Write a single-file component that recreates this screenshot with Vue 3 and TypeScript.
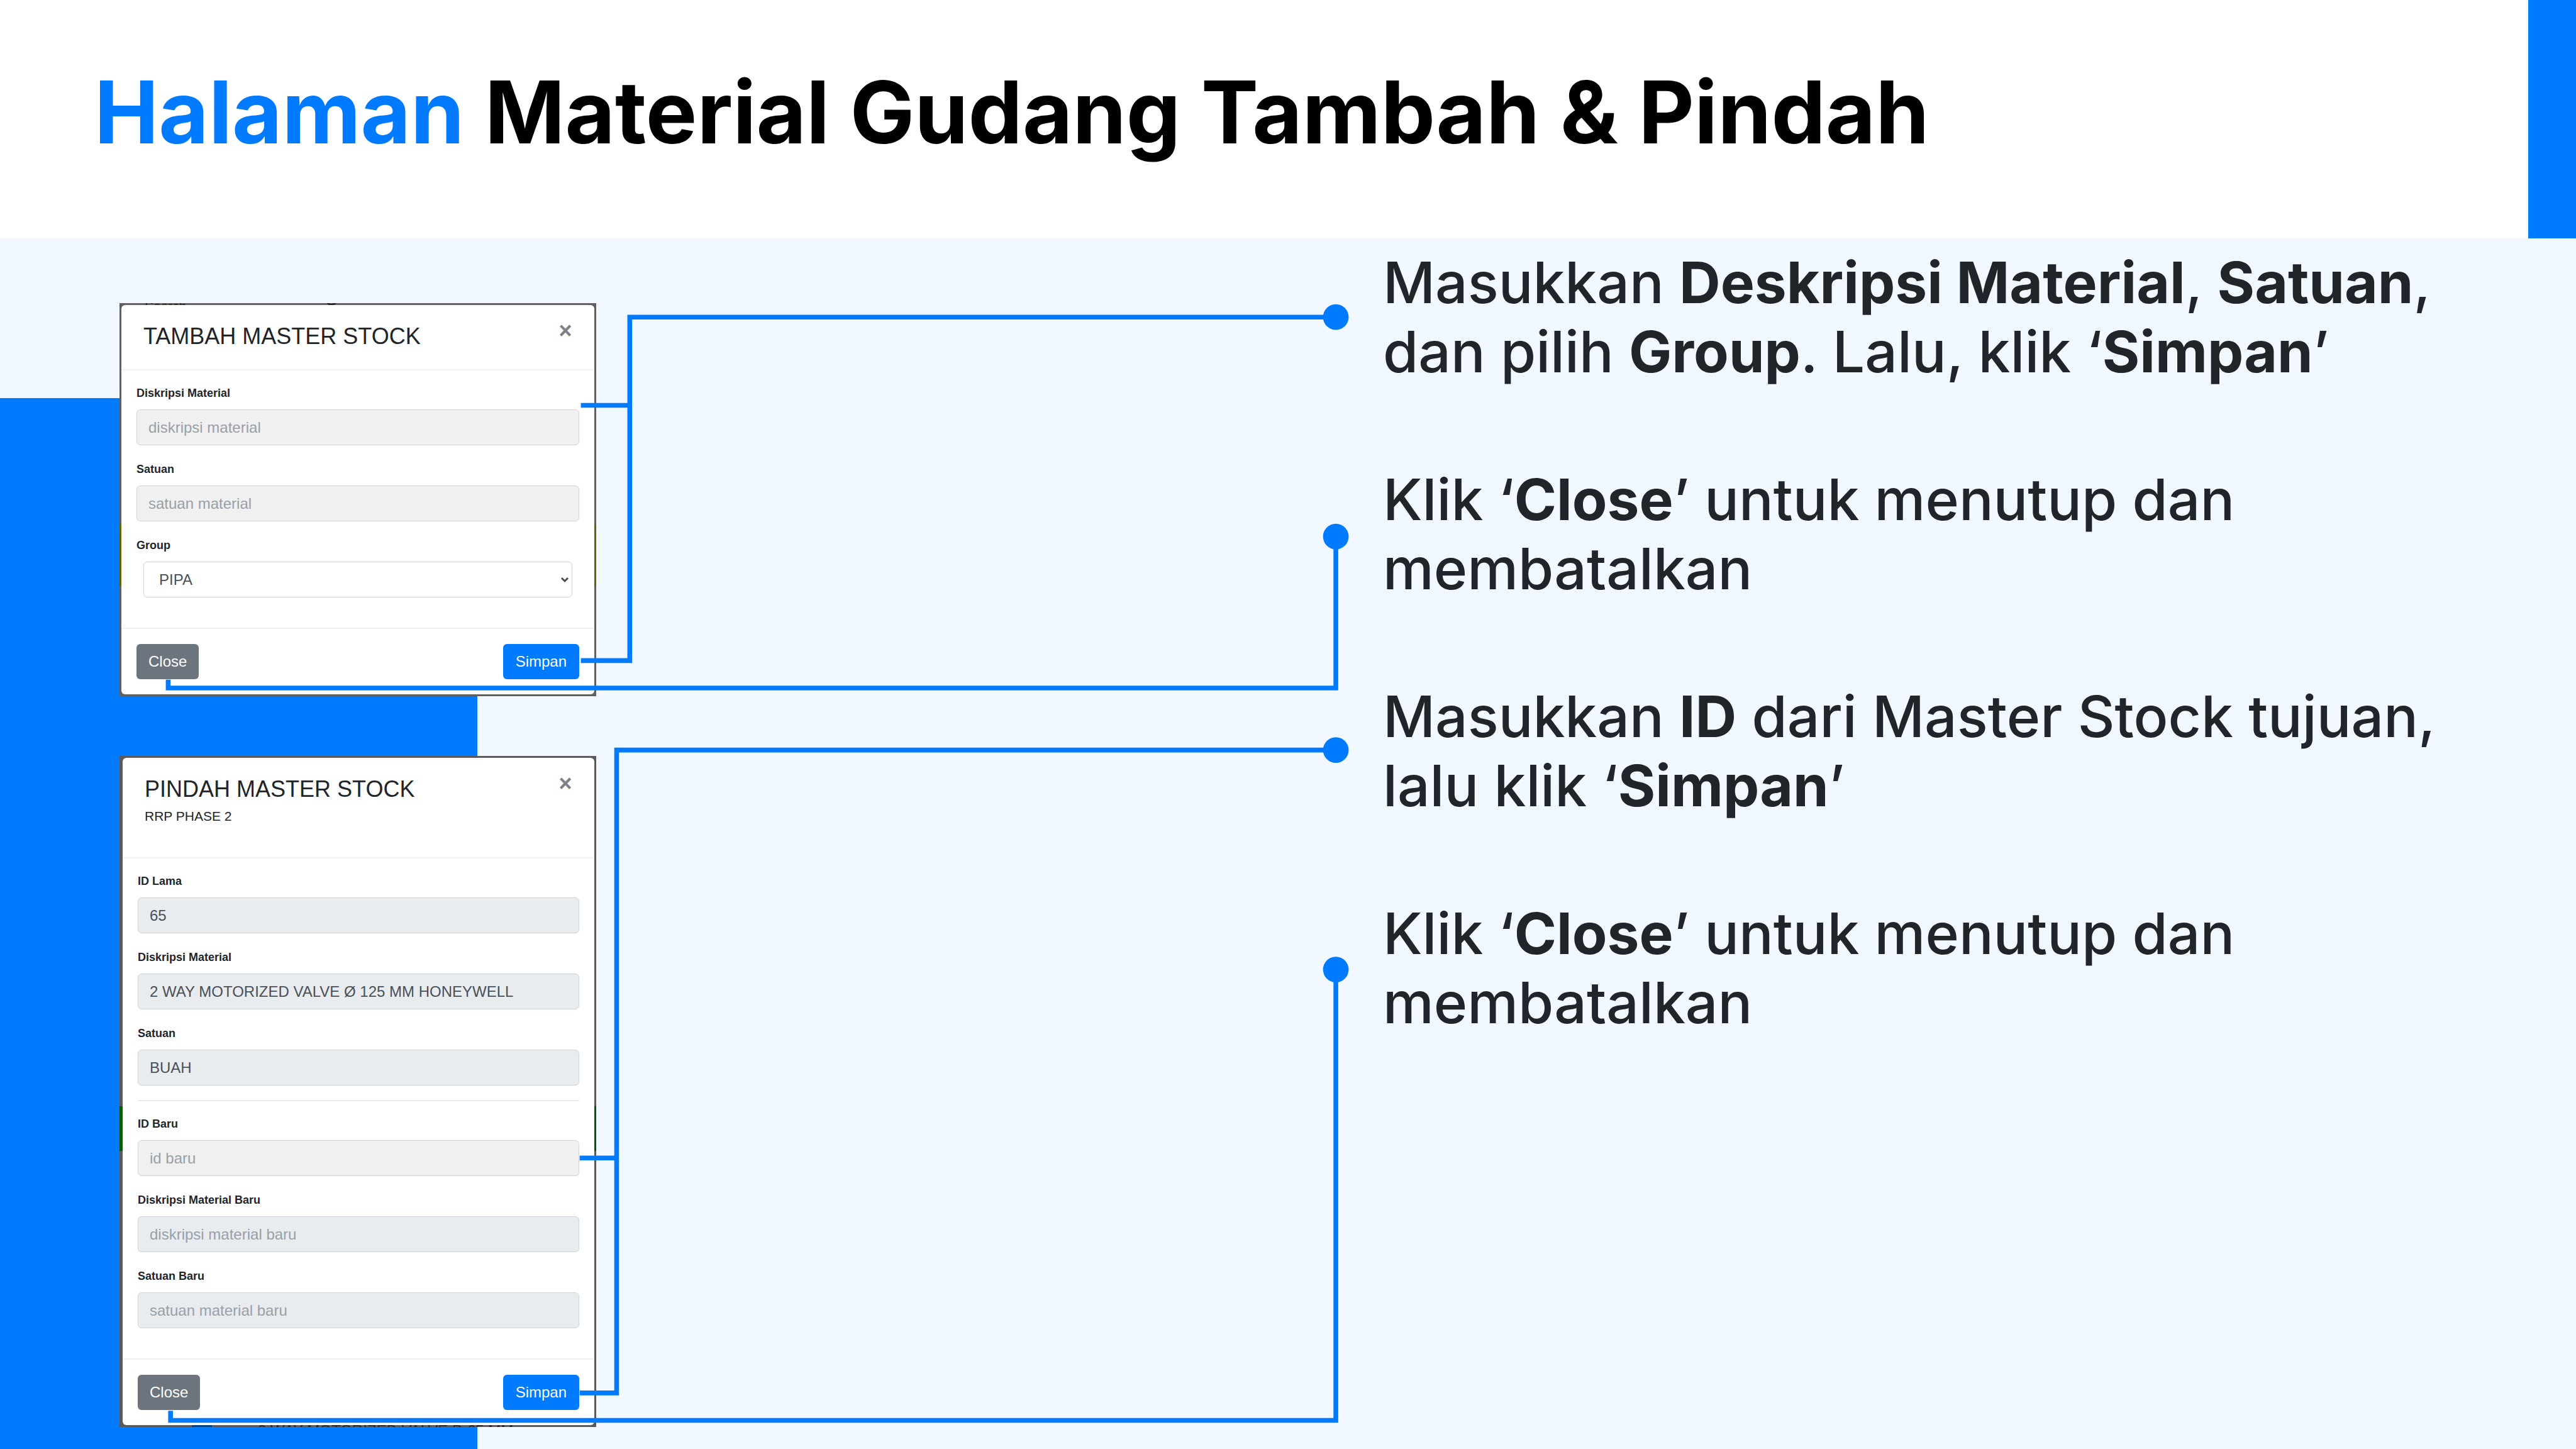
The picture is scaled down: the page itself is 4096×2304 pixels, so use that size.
<script setup lang="ts">
import { ref } from 'vue'

interface Field {
  id: string
  label: string
  placeholder?: string
  value?: string
  locked?: boolean
}

interface Part {
  text: string
  strong?: boolean
}

const addFields: Field[] = [
  { id: 'add-desc', label: 'Diskripsi Material', placeholder: 'diskripsi material' },
  { id: 'add-unit', label: 'Satuan', placeholder: 'satuan material' },
]

const oldFields: Field[] = [
  { id: 'old-id', label: 'ID Lama', value: '65', locked: true },
  { id: 'old-desc', label: 'Diskripsi Material', value: '2 WAY MOTORIZED VALVE Ø 125 MM HONEYWELL', locked: true },
  { id: 'old-unit', label: 'Satuan', value: 'BUAH', locked: true },
]

const newFields: Field[] = [
  { id: 'new-id', label: 'ID Baru', placeholder: 'id baru' },
  { id: 'new-desc', label: 'Diskripsi Material Baru', placeholder: 'diskripsi material baru', locked: true },
  { id: 'new-unit', label: 'Satuan Baru', placeholder: 'satuan material baru', locked: true },
]

const group = ref('PIPA')

const notes: Part[][] = [
  [
    { text: 'Masukkan ' },
    { text: 'Deskripsi Material', strong: true },
    { text: ', ' },
    { text: 'Satuan', strong: true },
    { text: ', dan pilih ' },
    { text: 'Group', strong: true },
    { text: '. Lalu, klik ‘' },
    { text: 'Simpan', strong: true },
    { text: '’' },
  ],
  [{ text: 'Klik ‘' }, { text: 'Close', strong: true }, { text: '’ untuk menutup dan membatalkan' }],
  [
    { text: 'Masukkan ' },
    { text: 'ID', strong: true },
    { text: ' dari Master Stock tujuan, lalu klik ‘' },
    { text: 'Simpan', strong: true },
    { text: '’' },
  ],
  [{ text: 'Klik ‘' }, { text: 'Close', strong: true }, { text: '’ untuk menutup dan membatalkan' }],
]

const connectors = [
  'M974 680H1056M974 1108H1056V532H2240',
  'M282 1140V1154H2240V900',
  'M972 1942H1034M972 2336H1034V1258H2240',
  'M286 2366V2382H2240V1626',
]
const dots = [532, 900, 1258, 1626]
</script>

<template>
  <main class="slide">
    <header class="head">
      <h1><span>Halaman</span> Material Gudang Tambah &amp; Pindah</h1>
    </header>

    <section class="stage">
      <div class="forms">
        <div class="frame frame-add">
          <span class="behind behind-search">Search</span>
          <span class="behind behind-lens"></span>
          <form class="modal" @submit.prevent>
            <div class="modal-head">
              <h2>TAMBAH MASTER STOCK</h2>
              <button type="button" class="dismiss" aria-label="Tutup">×</button>
            </div>
            <div class="modal-body">
              <div v-for="f in addFields" :key="f.id" class="field">
                <label :for="f.id">{{ f.label }}</label>
                <input :id="f.id" type="text" :placeholder="f.placeholder" />
              </div>
              <div class="field">
                <label for="add-group">Group</label>
                <div class="picker">
                  <select id="add-group" v-model="group">
                    <option>PIPA</option>
                  </select>
                  <svg viewBox="0 0 14 10" aria-hidden="true"><path d="M2 2l5 5 5-5" /></svg>
                </div>
              </div>
            </div>
            <div class="modal-foot">
              <button type="button" class="btn grey">Close</button>
              <button type="submit" class="btn blue">Simpan</button>
            </div>
          </form>
        </div>

        <div class="frame frame-move">
          <span class="behind behind-row">2 WAY MOTORIZED VALVE D 65 MM</span>
          <form class="modal" @submit.prevent>
            <div class="modal-head">
              <div>
                <h2>PINDAH MASTER STOCK</h2>
                <p>RRP PHASE 2</p>
              </div>
              <button type="button" class="dismiss" aria-label="Tutup">×</button>
            </div>
            <div class="modal-body">
              <div v-for="f in oldFields" :key="f.id" class="field">
                <label :for="f.id">{{ f.label }}</label>
                <input :id="f.id" type="text" :value="f.value" :readonly="f.locked" />
              </div>
              <hr />
              <div v-for="f in newFields" :key="f.id" class="field">
                <label :for="f.id">{{ f.label }}</label>
                <input :id="f.id" type="text" :placeholder="f.placeholder" :readonly="f.locked" />
              </div>
            </div>
            <div class="modal-foot">
              <button type="button" class="btn grey">Close</button>
              <button type="submit" class="btn blue">Simpan</button>
            </div>
          </form>
        </div>
      </div>

      <div class="notes">
        <p v-for="(note, i) in notes" :key="i">
          <template v-for="(part, j) in note" :key="j"><strong v-if="part.strong">{{ part.text }}</strong><template v-else>{{ part.text }}</template></template>
        </p>
      </div>

      <svg class="connectors" viewBox="0 400 2280 2030" aria-hidden="true">
        <path v-for="d in connectors" :key="d" :d="d" />
        <circle v-for="y in dots" :key="y" cx="2240" :cy="y" r="21.5" />
      </svg>
    </section>
  </main>
</template>

<style>
body {
  margin: 0;
}
</style>

<style scoped>
* {
  box-sizing: border-box;
}

.slide {
  display: flex;
  flex-direction: column;
  min-height: 100vh;
  background: #fff;
  color: #212529;
  font-family: Inter, sans-serif;
}

.head {
  min-height: 379px;
  padding: 98px 76px 0 150px;
  border-right: 76px solid #007bff;
}

h1 {
  margin: 0;
  font-size: 137px;
  line-height: 160px;
  font-weight: 700;
  color: #000;
}

h1 span {
  color: #007bff;
}

.stage {
  position: relative;
  flex: 1;
  display: flex;
  justify-content: flex-start;
  align-items: flex-start;
  gap: 1251px;
  padding: 0 140px 0 190px;
  background: linear-gradient(#007bff, #007bff) 0 254px / 759px 100% no-repeat #f1f8ff;
}

.forms {
  flex: none;
  width: 758px;
  display: flex;
  flex-direction: column;
  gap: 95px;
  padding: 103px 0 35px;
  font-family: "Liberation Sans", Arial, sans-serif;
}

/* Dimmed strip of the page that stays visible around each dialog */
.frame {
  position: relative;
  overflow: hidden;
}

.frame-add {
  padding: 3px;
  background: linear-gradient(#636300, #636300) 0 352px / 100% 98px no-repeat #606060;
}

.frame-move {
  padding: 3px 3px 3px 5px;
  background:
    linear-gradient(#004085, #004085) 115px 100% / 32px 3px no-repeat,
    linear-gradient(#005a00, #005a00) 0 557px / 100% 71px no-repeat #5a5a5a;
}

.behind {
  position: absolute;
  color: #222;
  font-size: 21px;
  line-height: 24px;
  white-space: nowrap;
}

.behind-search {
  top: -7px;
  left: 40px;
}

.behind-lens {
  top: -14px;
  left: 328px;
  width: 18px;
  height: 18px;
  border: 3px solid #222;
  border-radius: 50%;
}

.behind-row {
  bottom: -18px;
  left: 220px;
  font-size: 24px;
}

.modal {
  position: relative;
  border-radius: 6px;
  background: #fff;
}

.modal-head {
  display: flex;
  justify-content: space-between;
  align-items: flex-start;
  padding: 28px 34px 30px 35px;
  border-bottom: 2px solid #f0f1f2;
}

h2 {
  margin: 0;
  font-size: 36px;
  line-height: 44px;
  font-weight: 400;
}

.modal-head p {
  margin: 7px 0 21px;
  font-size: 21px;
  line-height: 28px;
}

.dismiss {
  width: 24px;
  padding: 0;
  border: 0;
  background: none;
  color: #7f7f7f;
  font: 700 36px/26px "Liberation Sans", Arial, sans-serif;
}

.modal-body {
  padding: 24px 24px 48px;
}

.field {
  display: flex;
  flex-direction: column;
  gap: 14px;
}

.field + .field {
  margin-top: 26px;
}

label {
  font-size: 18px;
  line-height: 24px;
  font-weight: 700;
}

input,
select {
  width: 100%;
  height: 57px;
  padding: 0 18px;
  border: 1px solid #ced4da;
  border-radius: 6px;
  background: #f0f0f0;
  color: #495057;
  font: 24px "Liberation Sans", Arial, sans-serif;
}

input[readonly] {
  background: #e8ecef;
}

input::placeholder {
  color: #98a0a7;
  opacity: 1;
}

.picker {
  position: relative;
  margin: 0 11px;
}

select {
  display: block;
  padding: 0 24px;
  appearance: none;
  background: #fff;
}

.picker svg {
  position: absolute;
  top: 24px;
  right: 5px;
  width: 14px;
  height: 10px;
  fill: none;
  stroke: #495057;
  stroke-width: 3;
}

hr {
  margin: 23px 0 24px;
  border: 0;
  border-top: 2px solid #ebebeb;
}

.modal-foot {
  display: flex;
  justify-content: space-between;
  padding: 24px;
  border-top: 2px solid #f0f1f2;
}

.btn {
  height: 56px;
  padding: 0 19px;
  border: 0;
  border-radius: 6px;
  color: #fff;
  font: 24px "Liberation Sans", Arial, sans-serif;
}

.grey {
  background: #6c757d;
}

.blue {
  padding: 0 20px;
  background: #007bff;
}

.notes {
  flex: 1;
  display: flex;
  flex-direction: column;
  gap: 125px;
  padding-top: 15px;
}

.notes p {
  margin: 0;
  font-size: 91px;
  line-height: 110px;
  font-weight: 500;
}

.notes strong {
  font-weight: 700;
}

.connectors {
  position: absolute;
  top: 0;
  left: 0;
  width: 2162px;
  height: 1925px;
  pointer-events: none;
}

.connectors path {
  fill: none;
  stroke: #007bff;
  stroke-width: 8;
}

.connectors circle {
  fill: #007bff;
}
</style>
